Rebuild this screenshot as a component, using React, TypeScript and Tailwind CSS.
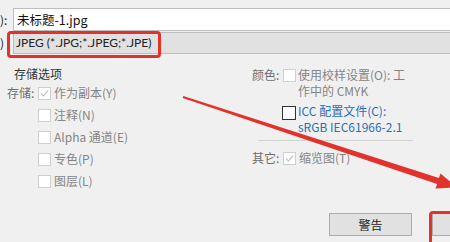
import React from 'react';

const Box: React.FC<{ checked?: boolean; dark?: boolean; className?: string }> = ({ checked, dark, className = '' }) => (
  <span
    className={`flex h-[13px] w-[13px] shrink-0 items-center justify-center border bg-white ${
      dark ? 'border-[#333]' : checked ? 'border-[#cfcfcf] bg-[#f4f4f4]' : 'border-[#cfcfcf]'
    } ${className}`}
  >
    {checked && (
      <svg width="9" height="9" viewBox="0 0 9 9" fill="none">
        <path d="M1 4.6 L3.4 7 L8 1.6" stroke="#b9b9b9" strokeWidth="1.1" />
      </svg>
    )}
  </span>
);

const Option: React.FC<{ label?: string; text: string; checked?: boolean }> = ({ label, text, checked }) => (
  <div className="flex h-[22px] items-center pl-[7px]">
    <span className="w-[31px] text-[#6e6e6e]">{label}</span>
    <Box checked={checked} />
    <span className="ml-[3px] text-[#858585]">{text}</span>
  </div>
);

export default function App() {
  return (
    <div className="relative h-[242px] w-[450px] overflow-hidden bg-[#f0f0f0] font-['Noto_Sans_CJK_SC','Microsoft_YaHei',sans-serif] text-[12px] leading-[16px] text-[#222]">
      {/* file name */}
      <div className="flex pt-[8px]">
        <span className="w-[13px] leading-[23px]">):</span>
        <div className="h-[23px] flex-1 border border-r-0 border-[#bdbdbd] bg-white pl-[3px] text-[12.5px] leading-[21px] text-[#111]">
          未标题-1.jpg
        </div>
      </div>

      {/* format */}
      <div className="mt-px flex">
        <span className="w-[13px] leading-[22px]">)</span>
        <div className="h-[22px] flex-1 border border-r-0 border-[#bdbdbd] bg-[#e1e1e1] pl-[2px] font-['Lato','Noto_Sans_CJK_SC',sans-serif] text-[12px] leading-[20px] text-[#222]">
          JPEG (*.JPG;*.JPEG;*.JPE)
        </div>
      </div>

      <div className="flex h-[159px]">
        {/* left column */}
        <div className="w-[252px] pt-[12px]">
          <div className="pl-[14px] text-[#333]">存储选项</div>
          <Option label="存储:" text="作为副本(Y)" checked />
          <Option text="注释(N)" />
          <Option text="Alpha 通道(E)" />
          <Option text="专色(P)" />
          <Option text="图层(L)" />
        </div>

        {/* right column */}
        <div className="flex-1 pt-[13px]">
          <div className="flex items-start">
            <span className="w-[31px] text-[#6e6e6e]">颜色:</span>
            <Box className="mt-[2px]" />
            <span className="ml-[2px] text-[#858585]">
              使用校样设置(O): 工<br />作中的 CMYK
            </span>
          </div>
          <div className="mt-[4px] flex items-start">
            <span className="w-[30px]" />
            <Box dark className="mt-[3px] h-[14px] w-[14px]" />
            <span className="ml-[2px] text-[#2a6fb8]">
              ICC 配置文件(C):<br />sRGB IEC61966-2.1
            </span>
          </div>
          <div className="ml-[6px] mt-[5px] h-px w-[155px] bg-[#d2d2d2]" />
          <div className="mt-[9px] flex items-center">
            <span className="w-[31px] text-[#6e6e6e]">其它:</span>
            <Box checked />
            <span className="ml-[3px] text-[#858585]">缩览图(T)</span>
          </div>
        </div>
      </div>

      {/* buttons */}
      <div className="flex pl-[329px]">
        <button className="h-[23px] w-[83px] shrink-0 border border-[#adadad] bg-[#e1e1e1] text-[12px] text-[#222]">
          警告
        </button>
        <button className="ml-[20px] h-[23px] w-[83px] shrink-0 border border-[#adadad] bg-[#e1e1e1]" />
      </div>

      {/* annotations */}
      <div className="absolute left-[7px] top-[31px] h-[27px] w-[154px] rounded-[4px] border-[3px] border-[#e3312b]" />
      <div className="absolute left-[429px] top-[211px] h-[40px] w-[40px] rounded-[4px] border-[3px] border-[#e3312b]" />
      <svg className="absolute left-0 top-0" width="450" height="242" viewBox="0 0 450 242">
        <polygon
          points="183.3,96 438.9,178.1 440.5,173.4 457,187.3 435.5,188.6 437.1,183.9 182.7,98"
          fill="#e3312b"
        />
      </svg>
    </div>
  );
}
